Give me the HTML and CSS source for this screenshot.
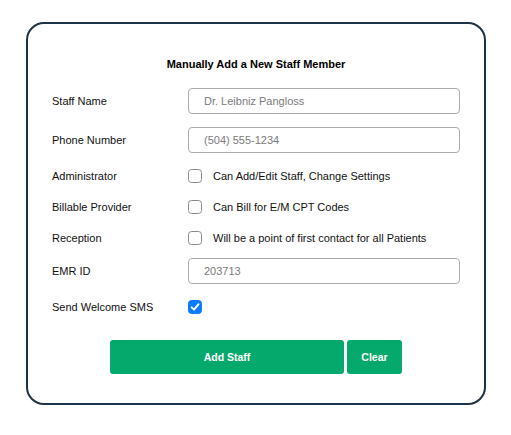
FILE: index.html
```html
<!DOCTYPE html>
<html lang="en">
<head>
<meta charset="utf-8">
<title>Add Staff Member</title>
<link rel="stylesheet" href="styles.css">
</head>
<body>
<div class="card">
  <h1 class="title">Manually Add a New Staff Member</h1>
  <div class="form">
    <div class="row row-input">
      <span class="label">Staff Name</span>
      <input class="field" type="text" placeholder="Dr. Leibniz Pangloss">
    </div>
    <div class="row row-input gap-13">
      <span class="label">Phone Number</span>
      <input class="field" type="text" placeholder="(504) 555-1234">
    </div>
    <div class="row row-check gap-7">
      <span class="label">Administrator</span>
      <span class="check-wrap"><span class="box"></span><span class="desc">Can Add/Edit Staff, Change Settings</span></span>
    </div>
    <div class="row row-check">
      <span class="label">Billable Provider</span>
      <span class="check-wrap"><span class="box"></span><span class="desc">Can Bill for E/M CPT Codes</span></span>
    </div>
    <div class="row row-check">
      <span class="label">Reception</span>
      <span class="check-wrap"><span class="box"></span><span class="desc">Will be a point of first contact for all Patients</span></span>
    </div>
    <div class="row row-input gap-5">
      <span class="label">EMR ID</span>
      <input class="field" type="text" placeholder="203713">
    </div>
    <div class="row row-check gap-7">
      <span class="label">Send Welcome SMS</span>
      <span class="check-wrap"><span class="box checked"><svg width="10" height="10" viewBox="0 0 10 10"><path d="M1.6 5.3 L4 7.7 L8.6 2.2" fill="none" stroke="#fff" stroke-width="1.9" stroke-linecap="round" stroke-linejoin="round"/></svg></span></span>
    </div>
  </div>
  <div class="actions">
    <button class="btn btn-add" type="button">Add Staff</button>
    <button class="btn btn-clear" type="button">Clear</button>
  </div>
</div>
</body>
</html>
```

FILE: styles.css
```css
* { box-sizing: border-box; }
html, body { margin: 0; padding: 0; background: #fff; }
body {
  font-family: "Liberation Sans", Arial, Helvetica, sans-serif;
  font-size: 11px;
  color: #111;
}
.card {
  width: 460px;
  height: 383px;
  margin: 22px 0 0 26px;
  border: 2px solid #1d3347;
  border-radius: 18px;
  padding: 33px 24px 0 24px;
}
.title {
  margin: 0 0 17px 0;
  font-size: 11px;
  line-height: 14px;
  font-weight: bold;
  text-align: center;
  color: #000;
}
.form { display: flex; flex-direction: column; }
.row {
  display: grid;
  grid-template-columns: 136px 1fr;
  align-items: center;
}
.row-input { height: 26px; }
.row-check { height: 31px; }
.gap-13 { margin-top: 13px; }
.gap-7 { margin-top: 7px; }
.gap-5 { margin-top: 5px; }
.label { color: #111; }
.field {
  width: 272px;
  height: 26px;
  border: 1px solid #ababab;
  border-radius: 4px;
  padding: 0 0 0 15px;
  font-family: inherit;
  font-size: 11px;
  color: #111;
  background: #fff;
  outline: none;
}
.field::placeholder { color: #7a7a7a; }
.check-wrap { display: flex; align-items: center; }
.box {
  width: 14px;
  height: 14px;
  border: 1px solid #8a8a8a;
  border-radius: 3.5px;
  background: #fff;
  display: flex;
  align-items: center;
  justify-content: center;
  flex: none;
}
.box.checked {
  background: #0b7bff;
  border-color: #0b7bff;
}
.desc { margin-left: 11px; color: #111; }
.actions {
  display: flex;
  justify-content: center;
  gap: 3px;
  margin-top: 18px;
}
.btn {
  height: 34px;
  border: none;
  border-radius: 3px;
  background: #05a96b;
  color: #fff;
  font-family: inherit;
  font-size: 10.5px;
  font-weight: bold;
  padding: 0;
}
.btn-add { width: 234px; }
.btn-clear { width: 55px; }
```
